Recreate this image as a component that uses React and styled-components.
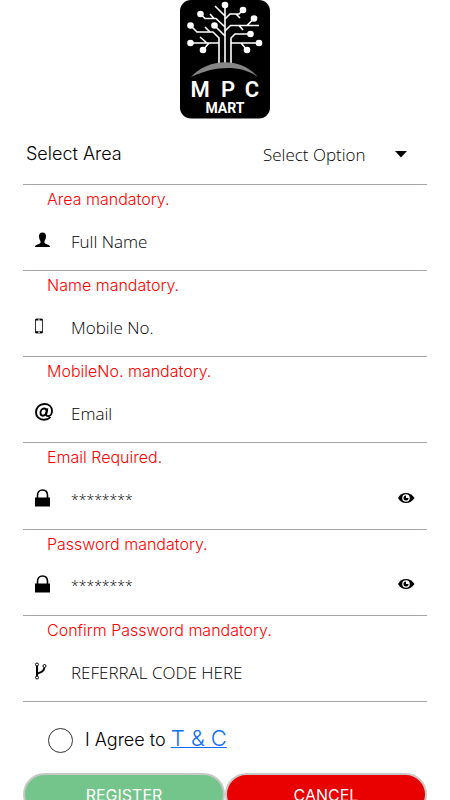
import React from "react";
import styled, { createGlobalStyle } from "styled-components";

const Global = createGlobalStyle`
  *, *::before, *::after { box-sizing: border-box; }
  html { scrollbar-width: none; }
  body {
    margin: 0;
    background: #fff;
    color: #000;
    font-family: Inter, "Liberation Sans", sans-serif;
    font-weight: 300;
  }
`;

const Page = styled.main`
  display: flex;
  flex-direction: column;
  align-items: stretch;
  padding: 0 23px 24px;
`;

const Logo = styled.svg`
  display: block;
  align-self: center;
  width: 90px;
  height: 119px;
  margin-bottom: 8px;
`;

const LogoText = styled.text`
  fill: #fff;
  font-family: Roboto, sans-serif;
  font-weight: ${(p) => p.$weight};
  font-size: ${(p) => p.$size}px;
  text-anchor: middle;
`;

const Form = styled.form`
  display: flex;
  flex-direction: column;
`;

const Fields = styled.div`
  display: grid;
  grid-auto-rows: 1fr;
  min-height: 517px;
`;

const Field = styled.div`
  display: flex;
  flex-direction: column;
`;

const Row = styled.div`
  display: flex;
  align-items: center;
  height: 58px;
  border-bottom: 1px solid #a3a5ab;
`;

const AreaLabel = styled.label`
  flex: 1;
  padding: 0 0 4px 3px;
  font-size: 18px;
`;

const SelectBox = styled.div`
  display: grid;
  align-items: center;
  width: 168px;
  padding-bottom: 2px;
  svg {
    grid-area: 1 / 1;
    justify-self: end;
    margin-right: 20px;
    pointer-events: none;
  }
`;

const Select = styled.select`
  grid-area: 1 / 1;
  width: 100%;
  padding: 0 32px 0 4px;
  border: 0;
  background: transparent;
  color: #000;
  appearance: none;
  font-family: "Open Sans", "Noto Sans", sans-serif;
  font-weight: 350;
  font-size: 17px;
  line-height: 24px;
`;

const IconLabel = styled.label`
  display: flex;
  width: 48px;
  padding: 0 0 4px 12px;
`;

const Input = styled.input`
  flex: 1;
  min-width: 0;
  padding: 0;
  border: 0;
  outline: 0;
  background: transparent;
  color: #000;
  font-family: "Open Sans", "Noto Sans", sans-serif;
  font-weight: 350;
  font-size: ${(p) => (p.type === "password" ? 14 : 17)}px;
  line-height: 24px;
  &::placeholder { color: #000; opacity: 1; }
`;

const EyeButton = styled.button`
  display: flex;
  margin-right: 12px;
  padding: 0 0 4px;
  border: 0;
  background: none;
  cursor: pointer;
`;

const ErrorText = styled.p`
  margin: 0;
  padding: 0 0 0 24px;
  color: #f00;
  font-size: 16px;
  line-height: 28px;
`;

const Agree = styled.div`
  display: flex;
  align-items: center;
  gap: 12px;
  padding: 24px 25px 19px;
`;

const Tick = styled.input`
  width: 25px;
  height: 25px;
  margin: 0;
  appearance: none;
  border: 1px solid #333;
  border-radius: 50%;
  background: #fff;
  &:checked { box-shadow: inset 0 0 0 5px #fff; background: #74c58c; }
`;

const AgreeText = styled.span`
  font-size: 18px;
  line-height: 28px;
`;

const TermsLink = styled.a`
  color: #0d6efd;
  font-size: 22px;
  line-height: 24px;
  text-decoration: underline;
  text-decoration-thickness: 1px;
`;

const Actions = styled.div`
  display: grid;
  grid-template-columns: 1fr 1fr;
`;

const Action = styled.button`
  height: 43px;
  padding: 0;
  border: 2px solid #c8c8c8;
  border-radius: 22px;
  background: ${(p) => p.$color};
  color: #fff;
  font-family: inherit;
  font-weight: 400;
  font-size: 16px;
`;

const UserIcon = () => (
  <svg width="15" height="16" viewBox="0 0 15 16" aria-hidden="true">
    <path d="M7.500 .5C10 .5 11.200 2.200 11 4.500C10.900 6.700 10.200 8 9.500 9V10.700C9.800 11.700 12.200 12.200 13.600 12.900C14.600 13.400 15 14 15 15H0C0 14 .4 13.400 1.400 12.900C2.800 12.200 5.200 11.700 5.500 10.700V9C4.800 8 4.100 6.700 4 4.500C3.800 2.200 5 .5 7.500 .5Z" />
  </svg>
);

const PhoneIcon = () => (
  <svg width="8" height="16" viewBox="0 0 8 16" aria-hidden="true">
    <rect x=".5" y="1" width="7" height="14" rx=".6" fill="#fff" stroke="#000" strokeWidth=".8" />
    <path d="M.5 1H7.500V2.600H.5ZM.5 13.200H7.500V15H.5Z" />
    <path d="M3 2H5M3 14.200H5" stroke="#fff" />
  </svg>
);

const AtIcon = () => (
  <svg width="18" height="18" viewBox="0 0 18 18" fill="none" stroke="#000" aria-hidden="true">
    <path d="M15.500 14.200C13.700 16 11.600 16.700 9 16.700C4.300 16.700 1 13.600 1 9.200C1 4.500 4.500 1 9.300 1C13.900 1 17 3.900 17 7.900C17 11 15.300 13.100 13.100 13.100C11.400 13.100 11 12.100 11.300 10.700L12.400 5.400" strokeWidth="1.900" />
    <path d="M11.700 8.200C11.600 6.400 10.600 5.500 9.200 5.500C7 5.500 5.500 7.500 5.500 9.800C5.500 11.700 6.400 12.700 7.900 12.700C9.800 12.700 11.300 10.800 11.700 8.200Z" strokeWidth="1.900" />
  </svg>
);

const LockIcon = () => (
  <svg width="15" height="18" viewBox="0 0 15 18" aria-hidden="true">
    <path d="M0 8.500H15V17.500H0Z" />
    <path d="M2.500 9V6.500C2.500 3 4.500 1 7.500 1S12.500 3 12.500 6.500V9" fill="none" stroke="#000" strokeWidth="1.600" />
  </svg>
);

const BranchIcon = () => (
  <svg width="12" height="18" viewBox="0 0 12 18" fill="none" stroke="#000" aria-hidden="true">
    <path d="M2 4V14M2 12C3 10.500 9 11 9.300 5.500" strokeWidth="2" />
    <circle cx="2" cy="2.500" r="1.500" fill="#fff" />
    <circle cx="2" cy="15.500" r="1.500" fill="#fff" />
    <circle cx="9.500" cy="4" r="1.500" fill="#fff" />
  </svg>
);

const EyeIcon = () => (
  <svg width="18" height="12" viewBox="0 0 18 12" aria-hidden="true">
    <path d="M1 6C3 2.800 5.300 1 9 1S15 2.800 17.500 6C15 9.200 12.700 11 9 11S3 9.200 1 6Z" />
    <circle cx="9" cy="6" r="3.800" fill="#fff" />
    <path d="M9 3.500A2.500 2.500 0 1 0 11.500 6H9Z" />
  </svg>
);

const Caret = () => (
  <svg width="12" height="7" viewBox="0 0 12 7" aria-hidden="true">
    <path d="M0 0H12L6 6.500Z" />
  </svg>
);

const nodes = [
  [45, 5], [20.5, 14], [63, 10], [74, 18.500], [10.500, 25.500], [34.500, 25.500],
  [70.500, 34], [10.500, 43], [79, 43], [23, 50], [67, 50],
];

const MartLogo = () => (
  <Logo viewBox="0 0 90 119" role="img" aria-label="MPC Mart">
    <rect width="90" height="118.500" rx="11" />
    <g fill="none" stroke="#fff" strokeWidth="1.600">
      <path d="M45 5V64M39 64V38L33 32H17L10.500 25.500M51 64V38L55 34H70.500" />
      <path d="M10.500 43H39M79 43H51M23 50L29 43M67 50L61 43M20 37L27 43M25 27L30 32" />
      <path d="M20.500 14L25 18.500H36L45 27M35 6L45 16M30 14L34 18.500M63 10L59 14H50L45 19M56 14L60 18" />
      <path d="M34.500 25.500L45 36M45 31L50.500 25.500H79M74 18.500L67 25.500M59 25.500L63 30" />
    </g>
    <g fill="#fff">
      {nodes.map(([x, y]) => <circle key={`${x}-${y}`} cx={x} cy={y} r="3.300" />)}
    </g>
    <path d="M11 77C29 58 60 57 78 77C60 64 34 66 11 77Z" fill="#858585" />
    <LogoText $size={22} $weight={600} x="20" y="97">M</LogoText>
    <LogoText $size={22} $weight={600} x="48" y="97">P</LogoText>
    <LogoText $size={22} $weight={600} x="72" y="97">C</LogoText>
    <LogoText $size={14} $weight={700} x="45" y="113">MART</LogoText>
  </Logo>
);

const fields = [
  { id: "name", label: "Full Name", icon: UserIcon, error: "Name mandatory." },
  { id: "mobile", label: "Mobile No.", type: "tel", icon: PhoneIcon, error: "MobileNo. mandatory." },
  { id: "email", label: "Email", type: "email", icon: AtIcon, error: "Email Required." },
  { id: "password", label: "Password", hint: "********", type: "password", icon: LockIcon, error: "Password mandatory." },
  { id: "confirm", label: "Confirm Password", hint: "********", type: "password", icon: LockIcon, error: "Confirm Password mandatory." },
];

function InputField({ id, label, hint, type = "text", icon: Icon, error }) {
  return (
    <Field>
      <Row>
        <IconLabel htmlFor={id} aria-label={label}><Icon /></IconLabel>
        <Input id={id} type={type} placeholder={hint || label} />
        {type === "password" && (
          <EyeButton type="button" aria-label={`Show ${label}`}><EyeIcon /></EyeButton>
        )}
      </Row>
      {error && <ErrorText>{error}</ErrorText>}
    </Field>
  );
}

export default function App() {
  return (
    <>
      <Global />
      <Page>
        <MartLogo />
        <Form onSubmit={(e) => e.preventDefault()}>
          <Fields>
            <Field>
              <Row>
                <AreaLabel htmlFor="area">Select Area</AreaLabel>
                <SelectBox>
                  <Select id="area"><option>Select Option</option></Select>
                  <Caret />
                </SelectBox>
              </Row>
              <ErrorText>Area mandatory.</ErrorText>
            </Field>
            {fields.map((f) => <InputField key={f.id} {...f} />)}
          </Fields>
          <InputField id="referral" label="REFERRAL CODE HERE" icon={BranchIcon} />
          <Agree>
            <Tick id="agree" type="checkbox" aria-label="I Agree to T & C" />
            <AgreeText>
              <label htmlFor="agree">I Agree to</label> <TermsLink href="#terms">T &amp; C</TermsLink>
            </AgreeText>
          </Agree>
          <Actions>
            <Action type="submit" $color="#74c58c">REGISTER</Action>
            <Action type="button" $color="#e90000">CANCEL</Action>
          </Actions>
        </Form>
      </Page>
    </>
  );
}
